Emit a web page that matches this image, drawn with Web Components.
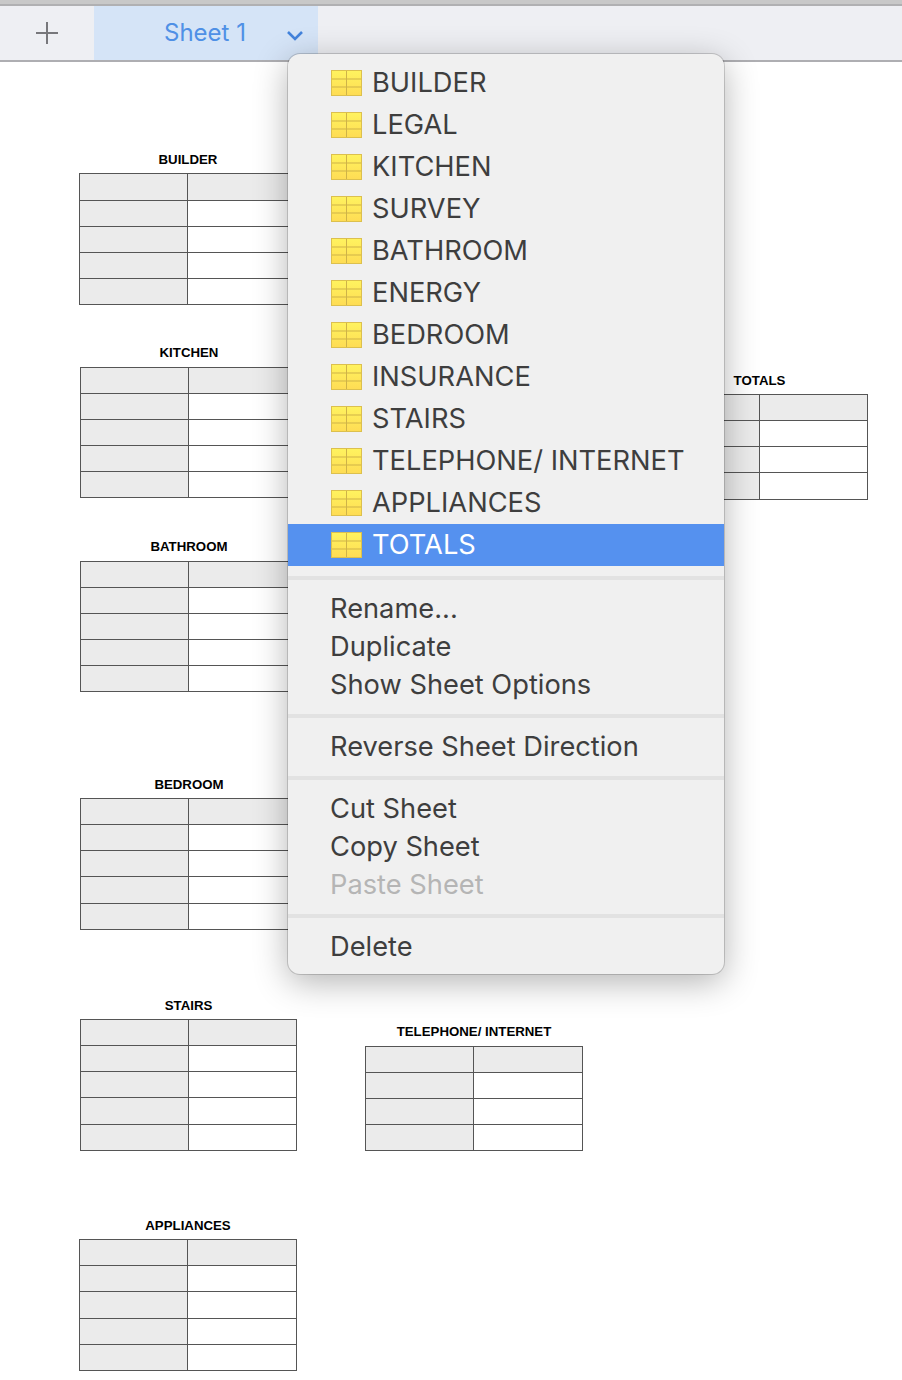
<!DOCTYPE html>
<html>
<head>
<meta charset="utf-8">
<title>Sheets</title>
<style>
  html, body { margin: 0; padding: 0; background: #fff; }
  body { width: 902px; height: 1380px; overflow: hidden; position: relative; display: flex; flex-direction: column; font-family: Inter, "Liberation Sans", sans-serif; }
</style>
</head>
<body>
<sheet-tabs label="Sheet 1"></sheet-tabs>
<sheet-canvas>
  <float-table title="BUILDER" x="79" y="173" rows="27,26,26,26,26"></float-table>
  <float-table title="KITCHEN" x="80" y="367" gap="23" rows="26,26,26,26,26"></float-table>
  <float-table title="BATHROOM" x="80" y="561" gap="23" rows="26,26,26,26,26"></float-table>
  <float-table title="BEDROOM" x="80" y="798" rows="26,26,26,27,26"></float-table>
  <float-table title="STAIRS" x="80" y="1019" cols="108,108" rows="26,26,26,27,26"></float-table>
  <float-table title="TELEPHONE/ INTERNET" x="365" y="1046" gap="23" rows="26,26,26,26"></float-table>
  <float-table title="APPLIANCES" x="79" y="1239" rows="26,26,27,26,26"></float-table>
  <float-table title="TOTALS" x="651" y="394" cols="108,108" rows="26,26,26,27"></float-table>
</sheet-canvas>
<sheet-menu>
  <menu-item sheet>BUILDER</menu-item>
  <menu-item sheet>LEGAL</menu-item>
  <menu-item sheet>KITCHEN</menu-item>
  <menu-item sheet>SURVEY</menu-item>
  <menu-item sheet>BATHROOM</menu-item>
  <menu-item sheet>ENERGY</menu-item>
  <menu-item sheet>BEDROOM</menu-item>
  <menu-item sheet>INSURANCE</menu-item>
  <menu-item sheet>STAIRS</menu-item>
  <menu-item sheet>TELEPHONE/ INTERNET</menu-item>
  <menu-item sheet>APPLIANCES</menu-item>
  <menu-item sheet active>TOTALS</menu-item>
  <menu-sep first></menu-sep>
  <menu-item>Rename...</menu-item>
  <menu-item>Duplicate</menu-item>
  <menu-item>Show Sheet Options</menu-item>
  <menu-sep></menu-sep>
  <menu-item>Reverse Sheet Direction</menu-item>
  <menu-sep></menu-sep>
  <menu-item>Cut Sheet</menu-item>
  <menu-item>Copy Sheet</menu-item>
  <menu-item disabled>Paste Sheet</menu-item>
  <menu-sep></menu-sep>
  <menu-item>Delete</menu-item>
</sheet-menu>

<script>
class SheetTabs extends HTMLElement {
  constructor() {
    super();
    this.attachShadow({ mode: 'open' });
    this.shadowRoot.innerHTML = `
      <style>
        :host { display: flex; flex: none; height: 62px; box-sizing: border-box; background: #eeeff3; box-shadow: inset 0 4px 0 #c8c8c8, inset 0 6px 0 #b0b0b2; border-bottom: 2px solid #aeaeb2; padding-top: 6px; font-family: Inter, "Liberation Sans", sans-serif; }
        .add { width: 94px; display: flex; align-items: center; justify-content: center; }
        .tab { width: 224px; background: #d5e4f7; display: flex; align-items: center; position: relative; color: #4f90e6; font-size: 24px; box-sizing: border-box; padding-left: 70px; }
        .tab span { margin-bottom: 2px; }
        .tab svg { position: absolute; left: 192px; top: 24px; }
      </style>
      <div class="add">
        <svg width="22" height="22" viewBox="0 0 22 22"><path d="M11 0v22M0 11h22" stroke="#77777b" stroke-width="2" fill="none"/></svg>
      </div>
      <div class="tab"><span></span>
        <svg width="18" height="11" viewBox="0 0 18 11"><path d="M2 2l7 7 7-7" stroke="#4383dc" stroke-width="2.6" fill="none"/></svg>
      </div>`;
    this.shadowRoot.querySelector('span').textContent = this.getAttribute('label');
  }
}
customElements.define('sheet-tabs', SheetTabs);

class SheetCanvas extends HTMLElement {
  constructor() {
    super();
    this.attachShadow({ mode: 'open' });
    this.shadowRoot.innerHTML = `
      <style>:host { display: block; position: relative; flex: 1; background: #fff; }</style>
      <slot></slot>`;
  }
}
customElements.define('sheet-canvas', SheetCanvas);

// tables float freely on the sheet, so x/y are page coordinates of the grid
class FloatTable extends HTMLElement {
  constructor() {
    super();
    this.attachShadow({ mode: 'open' });
    const rows = this.getAttribute('rows').split(',').map(Number);
    const cols = (this.getAttribute('cols') || '108,109').split(',').map(Number);
    const gap = Number(this.getAttribute('gap') || 22); // title block height above the grid
    let cells = '';
    rows.forEach((h, i) => {
      cells += `<div class="c head"></div><div class="c ${i === 0 ? 'head' : ''}"></div>`;
    });
    this.shadowRoot.innerHTML = `
      <style>
        :host { display: block; position: absolute; width: ${cols[0] + cols[1] + 1}px; left: ${this.getAttribute('x')}px; top: ${this.getAttribute('y') - 62 - gap}px; font-family: "Liberation Sans", Arial, sans-serif; }
        .title { height: ${gap}px; box-sizing: border-box; padding-top: 1px; font-size: 13.25px; line-height: 15px; font-weight: bold; color: #000; text-align: center; white-space: nowrap; }
        .grid { display: grid; grid-template-columns: ${cols[0]}px ${cols[1]}px; grid-template-rows: ${rows.map(h => h + 'px').join(' ')}; border-left: 1px solid #555; border-top: 1px solid #555; }
        .c { border-right: 1px solid #555; border-bottom: 1px solid #555; background: #fff; box-sizing: border-box; }
        .head { background: #ebebeb; }
      </style>
      <div class="title">${this.getAttribute('title')}</div>
      <div class="grid">${cells}</div>`;
  }
}
customElements.define('float-table', FloatTable);

class SheetMenu extends HTMLElement {
  constructor() {
    super();
    this.attachShadow({ mode: 'open' });
    this.shadowRoot.innerHTML = `
      <style>
        :host { display: flex; flex-direction: column; position: absolute; left: 288px; top: 54px; width: 436px; height: 920px; box-sizing: border-box; padding: 8px 0; background: #f0f0f0; border-radius: 12px; box-shadow: 0 0 0 1px rgba(0,0,0,.16), 0 8px 34px rgba(0,0,0,.3); font-family: Inter, "Liberation Sans", sans-serif; }
      </style>
      <slot></slot>`;
  }
}
customElements.define('sheet-menu', SheetMenu);

class MenuSep extends HTMLElement {
  constructor() {
    super();
    this.attachShadow({ mode: 'open' });
    this.shadowRoot.innerHTML = `
      <style>
        :host { display: block; height: 4px; margin: 11px 0 9px; background: #e2e2e2; }
        :host([first]) { margin-top: 10px; }
      </style>`;
  }
}
customElements.define('menu-sep', MenuSep);

class MenuItem extends HTMLElement {
  constructor() {
    super();
    this.attachShadow({ mode: 'open' });
    const isSheet = this.hasAttribute('sheet');
    this.shadowRoot.innerHTML = `
      <style>
        :host { display: flex; align-items: center; height: 38px; padding-left: 42px; gap: 10px; font-size: 27.25px; color: #3e3e3e; white-space: nowrap; }
        :host([sheet]) { height: 42px; padding-left: 43px; }
        :host([sheet]) .label { margin-bottom: 2px; }
        :host([active]) { background: #5591ef; color: #fff; }
        :host([disabled]) { color: #b5b5b5; }
        svg { flex: none; display: block; }
      </style>
      ${isSheet ? `<svg width="31" height="26" viewBox="0 0 31 26">
        <defs><linearGradient id="g" x1="0" y1="0" x2="0" y2="1"><stop offset="0" stop-color="#fff35f"/><stop offset="1" stop-color="#fedc54"/></linearGradient></defs>
        <rect x=".5" y=".5" width="30" height="25" fill="url(#g)" stroke="#dcc04e"/>
        <path d="M15.5 1v24M1 9h29M1 17h29" stroke="#cfb348" stroke-width="1" fill="none"/>
      </svg>` : ''}
      <span class="label"><slot></slot></span>`;
  }
}
customElements.define('menu-item', MenuItem);
</script>
</body>
</html>
